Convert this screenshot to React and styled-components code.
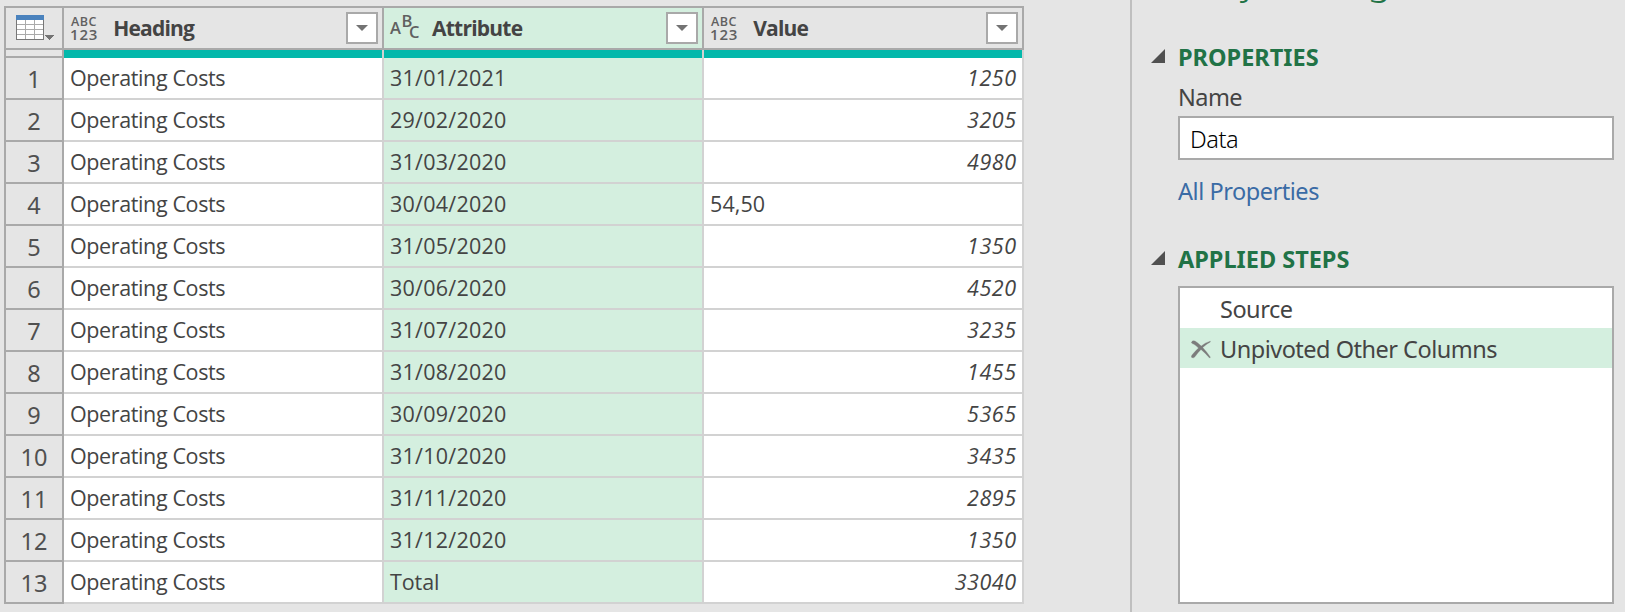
import React from 'react';
import styled, { createGlobalStyle } from 'styled-components';

const GlobalStyle = createGlobalStyle`
  * { box-sizing: border-box; }
  body {
    margin: 0;
    background: #e5e5e5;
    color: #444;
    overflow: hidden;
    font-family: "Noto Sans", "Open Sans", sans-serif;
  }
`;

const MINT = '#d4efdf';
const LINE = '#a9a9a9';
const SOFT = '#d2d2d2';

const Page = styled.div`
  display: flex;
  justify-content: space-between;
  width: 1625px;
  height: 612px;
  overflow: hidden;
`;

const Grid = styled.div`
  display: grid;
  grid-template-columns: 60px 320px 320px 320px;
  grid-template-rows: 44px 8px repeat(13, 42px);
  width: 1020px;
  height: 598px;
  margin: 6px 0 0 4px;
`;

const Corner = styled.div`
  display: flex;
  border: 2px solid ${LINE};
  padding: 7px 0 0 10px;
`;

const HeaderCell = styled.div`
  display: flex;
  align-items: center;
  border: 2px solid ${LINE};
  border-left: 0;
  padding: 0 4px 0 7px;
  background: ${(p) => (p.$selected ? MINT : '#e5e5e5')};
`;

const HeaderText = styled.span`
  flex: 1;
  padding-left: 15px;
  font: 700 21px/40px "Open Sans", sans-serif;
  letter-spacing: -0.78px;
`;

const FilterButton = styled.button`
  display: flex;
  align-items: center;
  justify-content: center;
  width: 32px;
  height: 32px;
  padding: 0;
  border: 2px solid ${LINE};
  background: #fff;
`;

const AnyType = styled.span`
  display: flex;
  flex: 0 0 27px;
  flex-direction: column;
  margin: 1px 0 0 -1px;
  color: #606060;
  font-family: "Open Sans", sans-serif;
  font-weight: 600;
`;

const TypeLetters = styled.span`
  font-size: 12.5px;
  line-height: 12px;
  letter-spacing: 0.5px;
  padding-left: 1px;
`;

const TypeDigits = styled.span`
  font-size: 15px;
  line-height: 13px;
  letter-spacing: 0.8px;
`;

const TextType = styled.span`
  display: flex;
  align-items: flex-start;
  width: 27px;
  height: 30px;
  margin-left: -1px;
  color: #606060;
  font: 600 16.5px/20px "Open Sans", sans-serif;
`;

const TypeGlyph = styled.span`
  width: ${(p) => p.$width}px;
  margin-top: ${(p) => p.$drop}px;
`;

const QualitySpacer = styled.div`
  border: solid ${LINE};
  border-width: 0 2px 2px;
`;

const QualityBar = styled.div`
  background: #03b8ab;
  border-right: 2px solid ${SOFT};
`;

const RowNumber = styled.div`
  border: solid ${LINE};
  border-width: 0 2px 2px;
  padding-top: 1px;
  text-align: center;
  font-size: 23.5px;
  line-height: 40px;
  color: #505050;
`;

const Cell = styled.div`
  border: solid ${SOFT};
  border-width: 0 2px 2px 0;
  padding: 0 5.5px 0 6px;
  background: ${(p) => (p.$selected ? MINT : '#fff')};
  font: 21.5px/40px "Open Sans", sans-serif;
  letter-spacing: ${(p) => p.$spacing ?? -0.38}px;
  font-style: ${(p) => (p.$number ? 'italic' : 'normal')};
  text-align: ${(p) => (p.$number ? 'right' : 'left')};
`;

const Panel = styled.aside`
  width: 495px;
  height: 612px;
  border-left: 2px solid #bfbfbf;
  padding: 0 11px 0 19px;
`;

const Title = styled.h1`
  margin: -48px 0 0;
  color: #217346;
  font-size: 39px;
  font-weight: 300;
  line-height: 54px;
  letter-spacing: -0.3px;
  white-space: nowrap;
`;

const Section = styled.section`
  display: flex;
  flex-direction: column;
  padding-left: 27px;
`;

const SectionTitle = styled.h2`
  display: flex;
  align-items: center;
  gap: 13px;
  margin: ${(p) => p.$top}px 0 0 -27px;
  color: #217346;
  font-size: 23.5px;
  font-weight: 700;
  line-height: 32px;

  svg { margin-top: -2px; }
`;

const Label = styled.label`
  margin-top: 9px;
  font-size: 23.5px;
  line-height: 30px;
  letter-spacing: -0.55px;
`;

const NameBox = styled.div`
  height: 44px;
  margin-top: 4px;
  padding-left: 10px;
  border: 2px solid ${LINE};
  background: #fff;
  color: #000;
  font-size: 23.5px;
  font-weight: 300;
  line-height: 42px;
  letter-spacing: -0.45px;
`;

const Link = styled.a`
  margin-top: 15px;
  color: #3a6ba5;
  font-size: 23.5px;
  line-height: 32px;
  letter-spacing: -0.46px;
`;

const StepList = styled.div`
  height: 318px;
  margin-top: 11px;
  border: 2px solid ${LINE};
  background: #fff;
`;

const Step = styled.div`
  display: grid;
  grid-template-columns: 40px 1fr;
  align-items: center;
  height: 40px;
  background: ${(p) => (p.$selected ? MINT : 'transparent')};
  font-size: 23.5px;
  line-height: 42px;
  letter-spacing: -0.5px;

  svg { margin: 0 0 0 11px; }
`;

const TableIcon = () => (
  <svg width="40" height="27" viewBox="0 0 40 27" shapeRendering="crispEdges">
    <path d="M0 5h28v20H0z" fill="#fff" />
    <path d="M1 9.5h26M1 14.5h26M1 19.5h26M9.500 5v19M18.500 5v19" stroke="#aaa" />
    <path d="M.5 5v19.500h27V5" fill="none" stroke="#777" />
    <path d="M0 0h28v5H0z" fill="#4a82bd" />
    <path d="M29 20h9l-4.500 5z" fill="#737373" />
  </svg>
);

const DownArrow = () => (
  <svg width="12" height="6" viewBox="0 0 12 6"><path d="M0 0h12L6 6z" fill="#737373" /></svg>
);

const Fold = () => (
  <svg width="14" height="14" viewBox="0 0 14 14"><path d="M14 0v14H0z" fill="#505050" /></svg>
);

const DeleteIcon = () => (
  <svg width="20" height="19" viewBox="0 0 20 19">
    <path d="M.6 2Q1.5.1 4 1q3 1.800 6.200 5.100Q14 2.600 19.200 1.200l.2.7q-4.200 2.100-7.700 5.600 3.800 4 7.700 9.700l-.8.9q-4.200-5.100-8.600-8.700-3.600 3.600-5.900 7.200-1.600 2-3.400.8-.9-1 .5-2.600 3-3.700 6.300-6.700Q3.800 4.200 1.200 3.500.2 3 .6 2z" fill="#7c7c7c" stroke="#7c7c7c" strokeWidth=".3" />
  </svg>
);

const AnyTypeIcon = () => (
  <AnyType><TypeLetters>ABC</TypeLetters><TypeDigits>123</TypeDigits></AnyType>
);

const TextTypeIcon = () => (
  <TextType>
    <TypeGlyph $width={11.5} $drop={5}>A</TypeGlyph>
    <TypeGlyph $width={7.5} $drop={-2}>B</TypeGlyph>
    <TypeGlyph $width={8} $drop={9}>C</TypeGlyph>
  </TextType>
);

const rows = [
  ['31/01/2021', '1250'], ['29/02/2020', '3205'], ['31/03/2020', '4980'],
  ['30/04/2020', '54,50'], ['31/05/2020', '1350'], ['30/06/2020', '4520'],
  ['31/07/2020', '3235'], ['31/08/2020', '1455'], ['30/09/2020', '5365'],
  ['31/10/2020', '3435'], ['31/11/2020', '2895'], ['31/12/2020', '1350'],
  ['Total', '33040'],
];

const columns = [
  { name: 'Heading', Icon: AnyTypeIcon },
  { name: 'Attribute', Icon: TextTypeIcon, selected: true },
  { name: 'Value', Icon: AnyTypeIcon },
];

export default function App() {
  return (
    <Page>
      <GlobalStyle />
      <Grid>
        <Corner><TableIcon /></Corner>
        {columns.map(({ name, Icon, selected }) => (
          <HeaderCell key={name} $selected={selected}>
            <Icon />
            <HeaderText>{name}</HeaderText>
            <FilterButton aria-label={`Filter ${name}`}><DownArrow /></FilterButton>
          </HeaderCell>
        ))}
        <QualitySpacer />
        {columns.map(({ name }) => <QualityBar key={name} />)}
        {rows.map(([attribute, value], i) => (
          <React.Fragment key={attribute}>
            <RowNumber>{i + 1}</RowNumber>
            <Cell>Operating Costs</Cell>
            <Cell $selected $spacing={attribute === 'Total' ? -0.1 : 0.24}>{attribute}</Cell>
            <Cell
              $spacing={value.includes(',') ? 0.1 : 0.52}
              $number={!value.includes(',')}
            >
              {value}
            </Cell>
          </React.Fragment>
        ))}
      </Grid>
      <Panel>
        <Title>Query Settings</Title>
        <Section>
          <SectionTitle $top={35}><Fold />PROPERTIES</SectionTitle>
          <Label>Name</Label>
          <NameBox>Data</NameBox>
          <Link>All Properties</Link>
        </Section>
        <Section>
          <SectionTitle $top={36}><Fold />APPLIED STEPS</SectionTitle>
          <StepList>
            <Step><span /><span>Source</span></Step>
            <Step $selected><DeleteIcon /><span>Unpivoted Other Columns</span></Step>
          </StepList>
        </Section>
      </Panel>
    </Page>
  );
}
